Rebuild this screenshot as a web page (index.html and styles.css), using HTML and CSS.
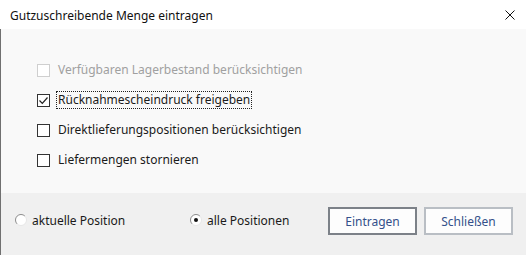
FILE: index.html
```html
<!DOCTYPE html>
<html lang="de">
<head>
<meta charset="utf-8">
<title>Gutzuschreibende Menge eintragen</title>
<link rel="stylesheet" href="styles.css">
</head>
<body>
<div class="window">
  <div class="titlebar">
    <span class="title">Gutzuschreibende Menge eintragen</span>
    <svg class="close" width="10" height="10" viewBox="0 0 10 10"><path d="M0.5 0.5 L9.5 9.5 M9.5 0.5 L0.5 9.5" stroke="#111" stroke-width="1" fill="none"/></svg>
  </div>
  <div class="content">
    <div class="options">
      <div class="row disabled">
        <span class="box"></span>
        <span class="label">Verfügbaren Lagerbestand berücksichtigen</span>
      </div>
      <div class="row">
        <span class="box"><svg width="11" height="11" viewBox="0 0 11 11"><path d="M1.5 5.5 L4.3 8.3 L9.5 2.5" stroke="#222" stroke-width="1.2" fill="none"/></svg></span>
        <span class="label focus">Rücknahmescheindruck freigeben</span>
      </div>
      <div class="row">
        <span class="box"></span>
        <span class="label">Direktlieferungspositionen berücksichtigen</span>
      </div>
      <div class="row">
        <span class="box"></span>
        <span class="label">Liefermengen stornieren</span>
      </div>
    </div>
    <div class="footer">
      <div class="radio first">
        <svg width="12" height="12" viewBox="0 0 12 12"><circle cx="6" cy="6" r="5.5" fill="#fff"/><path d="M2.1 9.9 A5.5 5.5 0 0 1 9.9 2.1" stroke="#8c8c8c" stroke-width="1" fill="none"/><path d="M9.9 2.1 A5.5 5.5 0 0 1 2.1 9.9" stroke="#e6e6e6" stroke-width="1" fill="none"/></svg>
        <span>aktuelle Position</span>
      </div>
      <div class="radio">
        <svg width="12" height="12" viewBox="0 0 12 12"><circle cx="6" cy="6" r="5.5" fill="#fff"/><path d="M2.1 9.9 A5.5 5.5 0 0 1 9.9 2.1" stroke="#8c8c8c" stroke-width="1" fill="none"/><path d="M9.9 2.1 A5.5 5.5 0 0 1 2.1 9.9" stroke="#e6e6e6" stroke-width="1" fill="none"/><circle cx="6" cy="6" r="2" fill="#111"/></svg>
        <span>alle Positionen</span>
      </div>
      <div class="buttons">
        <button class="btn default">Eintragen</button>
        <button class="btn">Schließen</button>
      </div>
    </div>
  </div>
</div>
</body>
</html>
```
FILE: styles.css
```css
html, body {
  margin: 0;
  padding: 0;
}
body {
  width: 526px;
  height: 255px;
  overflow: hidden;
  font-family: "Noto Sans", "DejaVu Sans", sans-serif;
  font-size: 12px;
  color: #1a1a1a;
  background: #fff;
}
.window {
  display: flex;
  flex-direction: column;
  height: 255px;
}
.titlebar {
  height: 29px;
  display: flex;
  align-items: center;
  justify-content: space-between;
  padding: 0 11px 0 10px;
  background: #fff;
}
.title {
  font-size: 12px;
  color: #111;
  margin-top: 2px;
}
.close {
  display: block;
  margin-top: 0;
}
.content {
  flex: 1;
  display: flex;
  flex-direction: column;
  border-left: 1px solid #707070;
  background: #f9f9f9;
}
.options {
  height: 164px;
  padding: 26px 0 0 36px;
  box-sizing: border-box;
}
.row {
  height: 30px;
  display: flex;
  align-items: center;
}
.box {
  width: 13px;
  height: 13px;
  box-sizing: border-box;
  border: 1px solid #333;
  background: #fff;
  display: flex;
  align-items: center;
  justify-content: center;
  margin-right: 6px;
}
.box svg {
  display: block;
}
.label {
  padding: 1px 1px;
  border: 1px solid transparent;
  line-height: 14px;
}
.label.focus {
  border: 1px dotted #222;
}
.row.disabled .box {
  border-color: #cfcfcf;
}
.row.disabled .label {
  color: #a0a0a0;
}
.footer {
  flex: 1;
  background: #f0f0f0;
  display: flex;
  align-items: flex-start;
  padding: 14px 13px 0 14px;
}
.radio {
  display: flex;
  align-items: center;
  height: 26px;
}
.radio svg {
  display: block;
  margin-right: 5px;
}
.radio.first {
  width: 175px;
}
.buttons {
  margin-left: auto;
  display: flex;
  gap: 7px;
}
.btn {
  width: 89px;
  height: 28px;
  box-sizing: border-box;
  font-family: "Noto Sans", "DejaVu Sans", sans-serif;
  font-size: 12px;
  color: #34508a;
  background: #fdfdfd;
  border: 2px solid #b9bec4;
  padding: 0;
}
.btn.default {
  border-color: #7c8188;
}
```
